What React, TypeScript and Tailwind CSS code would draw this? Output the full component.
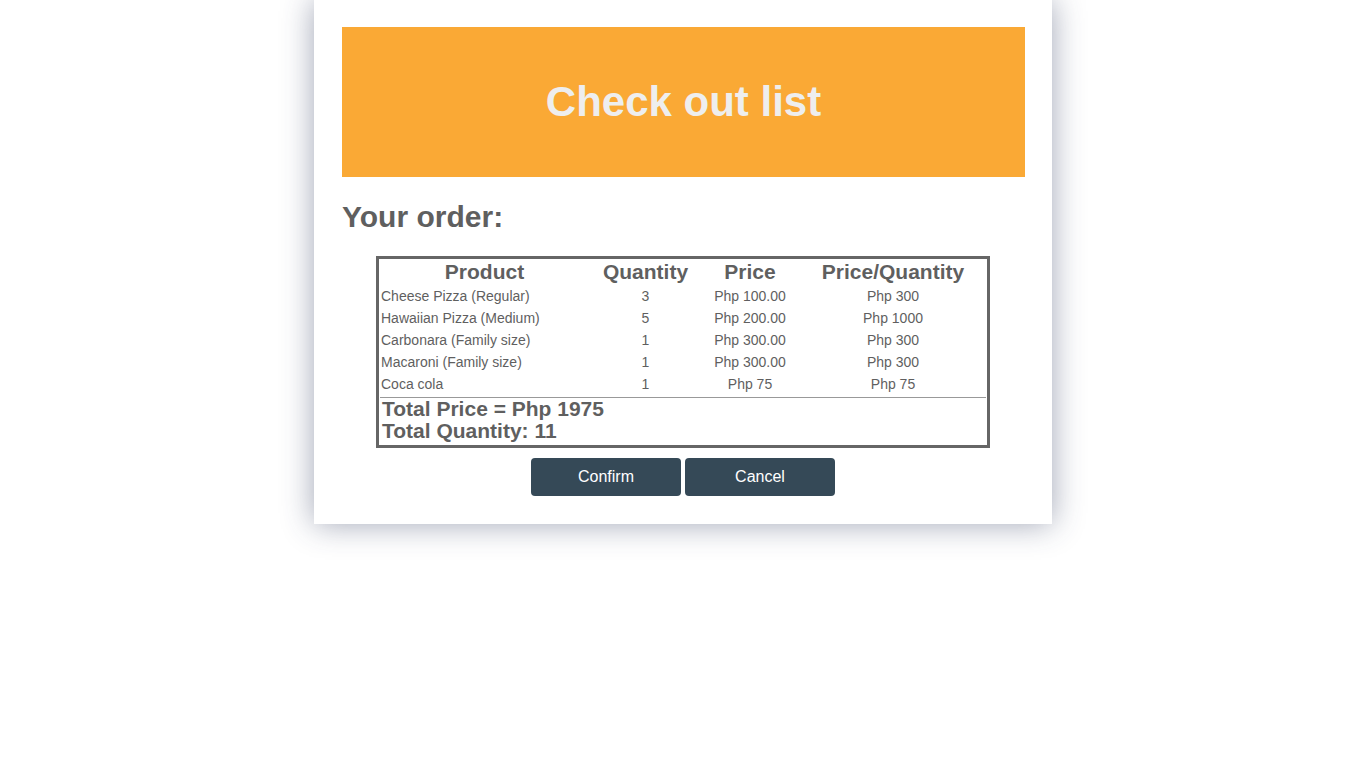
import React from 'react'

const items = [
	{ name: 'Cheese Pizza (Regular)', qty: 3, price: 'Php 100.00', total: 'Php 300' },
	{ name: 'Hawaiian Pizza (Medium)', qty: 5, price: 'Php 200.00', total: 'Php 1000' },
	{ name: 'Carbonara (Family size)', qty: 1, price: 'Php 300.00', total: 'Php 300' },
	{ name: 'Macaroni (Family size)', qty: 1, price: 'Php 300.00', total: 'Php 300' },
	{ name: 'Coca cola', qty: 1, price: 'Php 75', total: 'Php 75' }
]

export default function App() {
	return (
		<div className="min-h-screen bg-white font-['Liberation_Sans',Arial,sans-serif] text-[#5f5f5f]">
			<div className="mx-auto w-[738px] bg-white pt-[27px] pb-[28px] pl-[28px] pr-[27px] shadow-[0_0_30px_rgba(45,55,90,0.45)]">
				{/* Banner */}
				<div className="flex h-[150px] items-center justify-center bg-[#faa935]">
					<h1 className="text-[42px] font-bold leading-none text-[#eeeeee]">Check out list</h1>
				</div>

				<h2 className="mt-[23px] text-[30px] font-bold leading-[34px]">Your order:</h2>

				{/* Order table */}
				<table className="ml-[34px] mt-[22px] w-[614px] table-fixed border-separate border-spacing-0 border-[3px] border-[#666666]">
					<colgroup>
						<col className="w-[211px]" />
						<col className="w-[111px]" />
						<col className="w-[98px]" />
						<col className="w-[188px]" />
					</colgroup>
					<thead>
						<tr className="h-[26px] text-[21px] font-bold leading-[24px]">
							<th className="p-0 text-center">Product</th>
							<th className="p-0 text-center">Quantity</th>
							<th className="p-0 text-center">Price</th>
							<th className="p-0 text-center">Price/Quantity</th>
						</tr>
					</thead>
					<tbody className="text-[14px]">
						{items.map((item) => (
							<tr key={item.name} className="h-[22px]">
								<td className="pl-[2px] text-left">{item.name}</td>
								<td className="text-center">{item.qty}</td>
								<td className="text-center">{item.price}</td>
								<td className="text-center">{item.total}</td>
							</tr>
						))}
						<tr>
							<td colSpan={4} className="px-[1px] pt-[2px]">
								<div className="border-t border-[#999999]" />
							</td>
						</tr>
						<tr>
							<td colSpan={4} className="pl-[3px] pb-[3px] text-[21px] font-bold leading-[22px]">
								<div>Total Price = Php 1975</div>
								<div>Total Quantity: 11</div>
							</td>
						</tr>
					</tbody>
				</table>

				{/* Actions */}
				<div className="mt-[10px] flex justify-center gap-[4px] pr-[1px]">
					<button className="h-[38px] w-[150px] rounded-[4px] bg-[#354957] text-[16px] text-white">
						Confirm
					</button>
					<button className="h-[38px] w-[150px] rounded-[4px] bg-[#354957] text-[16px] text-white">
						Cancel
					</button>
				</div>
			</div>
		</div>
	)
}
